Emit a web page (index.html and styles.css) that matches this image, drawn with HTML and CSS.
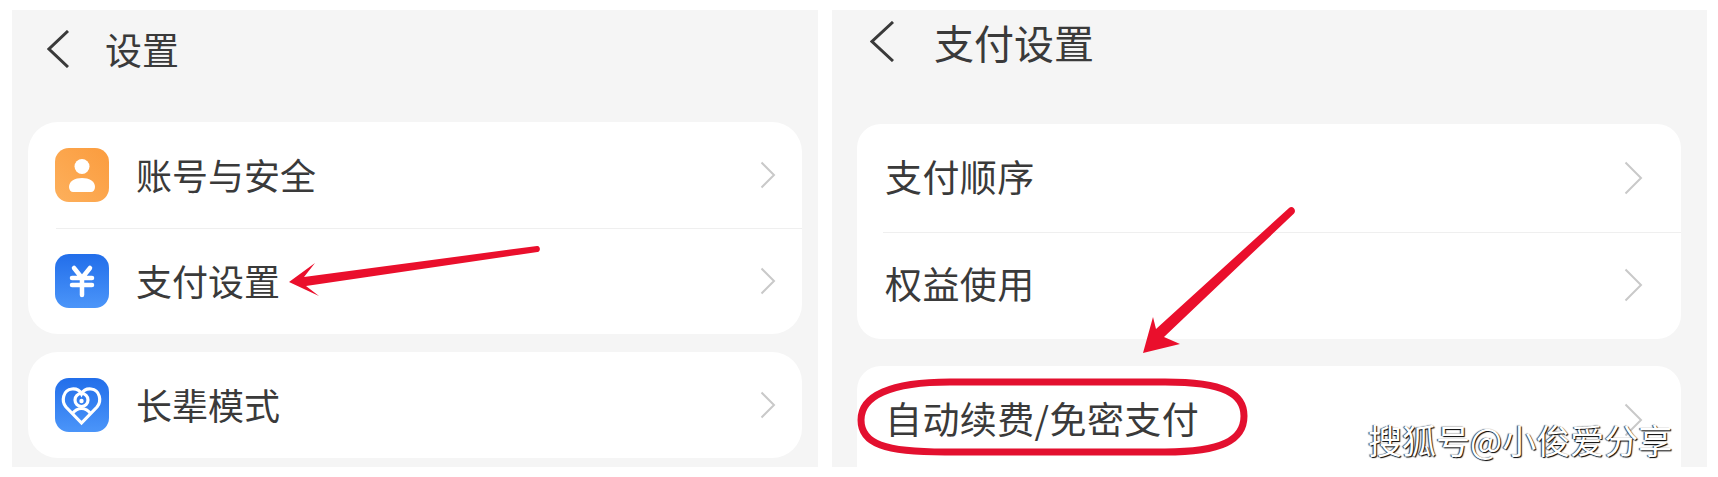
FILE: index.html
```html
<!DOCTYPE html>
<html lang="zh-CN">
<head>
    <meta charset="UTF-8">
    <meta name="viewport" content="width=device-width, initial-scale=1.0">
    <title>支付设置</title>
    <link rel="stylesheet" href="styles.css">
</head>
<body>
    <div class="page">
        <section class="panel panel-left">
            <header class="topbar">
                <svg class="back" viewBox="0 0 22 38"><path d="M21 1 2 19l19 18"/></svg>
                <h1>设置</h1>
            </header>
            <div class="card">
                <div class="row">
                    <svg class="icon" viewBox="0 0 54 54">
                        <defs>
                            <linearGradient id="orange" x1="1" y1="0" x2="0" y2="1">
                                <stop offset="0" stop-color="#fb9c3e"/>
                                <stop offset="1" stop-color="#fdb05c"/>
                            </linearGradient>
                            <linearGradient id="blue" x1="0" y1="0" x2="0" y2="1">
                                <stop offset="0" stop-color="#226eea"/>
                                <stop offset="1" stop-color="#4b95f9"/>
                            </linearGradient>
                        </defs>
                        <rect width="54" height="54" rx="14" fill="url(#orange)"/>
                        <circle cx="27" cy="18.5" r="7.5" fill="#fff"/>
                        <path d="M14 39c0-6 6-9 13-9s13 3 13 9c0 3-2 5-4 5H18c-2 0-4-2-4-5z" fill="#fff"/>
                    </svg>
                    <span class="label">账号与安全</span>
                    <svg class="chevron" viewBox="0 0 16 28"><path d="M1.5 1.5 14 14 1.5 26.500"/></svg>
                </div>
                <div class="row">
                    <svg class="icon" viewBox="0 0 54 54">
                        <rect width="54" height="54" rx="14" fill="url(#blue)"/>
                        <path class="glyph" d="M19 14l8 10 8-10M17 24h20M17 31h20M27 24v17"/>
                    </svg>
                    <span class="label">支付设置</span>
                    <svg class="chevron" viewBox="0 0 16 28"><path d="M1.5 1.5 14 14 1.5 26.500"/></svg>
                </div>
            </div>
            <div class="card card-gap">
                <div class="row">
                    <svg class="icon" viewBox="0 0 54 54">
                        <rect width="54" height="54" rx="14" fill="url(#blue)"/>
                        <path class="line" d="M26.500 45 11 29C6 23 8 12 17 11c5-.5 8 2 9.500 5 1.500-3 4.500-5.500 9.500-5 9 1 11 12 6 18z"/>
                        <circle class="line" cx="26.500" cy="22" r="6.500"/>
                        <path class="line" d="M17 36c3-4 6-5.500 9.500-5.500S33 32 36 36"/>
                        <circle cx="26.500" cy="23" r="2.200" fill="#fff"/>
                    </svg>
                    <span class="label">长辈模式</span>
                    <svg class="chevron" viewBox="0 0 16 28"><path d="M1.5 1.5 14 14 1.5 26.500"/></svg>
                </div>
            </div>
        </section>

        <section class="panel panel-right">
            <header class="topbar">
                <svg class="back" viewBox="0 0 24 41"><path d="M23 1 2 20.500 23 40"/></svg>
                <h1>支付设置</h1>
            </header>
            <div class="card">
                <div class="row">
                    <span class="label">支付顺序</span>
                    <svg class="chevron" viewBox="0 0 19 34"><path d="M1.500 1.500 17 17 1.500 32.500"/></svg>
                </div>
                <div class="row">
                    <span class="label">权益使用</span>
                    <svg class="chevron" viewBox="0 0 19 34"><path d="M1.500 1.500 17 17 1.500 32.500"/></svg>
                </div>
            </div>
            <div class="card card-open">
                <div class="row">
                    <span class="label">自动续费/免密支付</span>
                    <svg class="chevron" viewBox="0 0 19 34"><path d="M1.500 1.500 17 17 1.500 32.500"/></svg>
                </div>
            </div>
        </section>
    </div>

    <!-- red marks drawn over the screenshot -->
    <svg class="marks" viewBox="0 0 1718 477">
        <path d="M289 282 315 263 304 277 537 246c3.500-.5 4 5.500.5 6L306 286l13 10z"/>
        <path d="M1143 353 1153 317 1156 329 1289 208c3.500-3 8 2 5 5.500L1164 337l16 7z"/>
        <path class="oval" d="M861 420C861 396 890 382 950 382L1165 382C1225 382 1244 394 1244 416C1244 440 1222 452 1165 452L945 452C885 452 861 444 861 420Z"/>
    </svg>
    <div class="watermark">搜狐号@小俊爱分享</div>
</body>
</html>
```

FILE: styles.css
```css
* {
    box-sizing: border-box;
}
html, body {
    margin: 0;
    height: 477px;
    overflow: hidden;
    background: #fff;
}
body {
    position: relative;
    font-family: "Noto Sans CJK SC", "Noto Sans", sans-serif;
    color: #3a3a3a;
}
.page {
    display: flex;
    gap: 14px;
    padding: 10px 11px 10px 12px;
    height: 477px;
}
.panel {
    background: #f5f5f5;
    height: 457px;
    overflow: hidden;
}
.panel-left {
    width: 806px;
    padding: 0 16px;
}
.panel-right {
    width: 875px;
    padding: 0 26px 0 25px;
}
.topbar {
    display: flex;
    align-items: center;
}
.topbar h1 {
    margin: 0;
    font-weight: 400;
    line-height: 1;
}
.back {
    fill: none;
    stroke: #3a3a3a;
    stroke-width: 3;
}
.panel-left .topbar {
    height: 78px;
    margin-bottom: 34px;
    padding-left: 19px;
}
.panel-left .topbar h1 {
    font-size: 37px;
    margin-left: 36px;
}
.panel-left .back {
    width: 22px;
    height: 38px;
}
.panel-right .topbar {
    height: 63px;
    margin-bottom: 51px;
    padding-left: 13px;
}
.panel-right .topbar h1 {
    font-size: 40px;
    margin-left: 40px;
}
.panel-right .back {
    width: 24px;
    height: 41px;
}
.card {
    background: #fff;
    border-radius: 30px;
}
.card-gap {
    margin-top: 18px;
}
.panel-right .card {
    border-radius: 24px;
}
.panel-right .card-open {
    margin-top: 27px;
    border-radius: 24px 24px 0 0;
    height: 110px;
}
.row {
    display: flex;
    align-items: center;
    position: relative;
}
.row + .row::before {
    content: "";
    position: absolute;
    top: 0;
    right: 0;
    height: 1px;
    background: #efefef;
}
.panel-left .row {
    height: 106px;
    padding: 0 26px 0 27px;
}
.panel-left .row + .row::before {
    left: 28px;
}
.panel-right .row {
    height: 107.500px;
    padding: 0 38px 0 28px;
}
.panel-right .row + .row::before {
    left: 26px;
}
.panel-right .card-open .row {
    height: 107px;
}
.icon {
    width: 54px;
    height: 54px;
    margin-right: 27px;
    flex: none;
}
.label {
    flex: 1;
    font-size: 36px;
    line-height: 1;
    white-space: nowrap;
    padding-bottom: 3px;
}
.panel-right .label {
    font-size: 37px;
    letter-spacing: 0.4px;
}
.chevron {
    fill: none;
    stroke: #c9c9c9;
    stroke-width: 2;
    flex: none;
}
.panel-left .chevron {
    width: 16px;
    height: 28px;
}
.panel-right .chevron {
    width: 19px;
    height: 34px;
}
.glyph {
    fill: none;
    stroke: #fff;
    stroke-width: 4.500;
    stroke-linecap: round;
    stroke-linejoin: round;
}
.line {
    fill: none;
    stroke: #fff;
    stroke-width: 3.200;
}
.marks {
    position: absolute;
    left: 0;
    top: 0;
    width: 1718px;
    height: 477px;
    fill: #ea0f2c;
}
.marks .oval {
    fill: none;
    stroke: #e3102f;
    stroke-width: 7;
}
.watermark {
    position: absolute;
    left: 1368px;
    top: 420px;
    font-size: 34px;
    line-height: 40px;
    white-space: nowrap;
    color: #fff;
    text-shadow: 1px 1px 1px #000, -1px 0 1px #333;
}
```
